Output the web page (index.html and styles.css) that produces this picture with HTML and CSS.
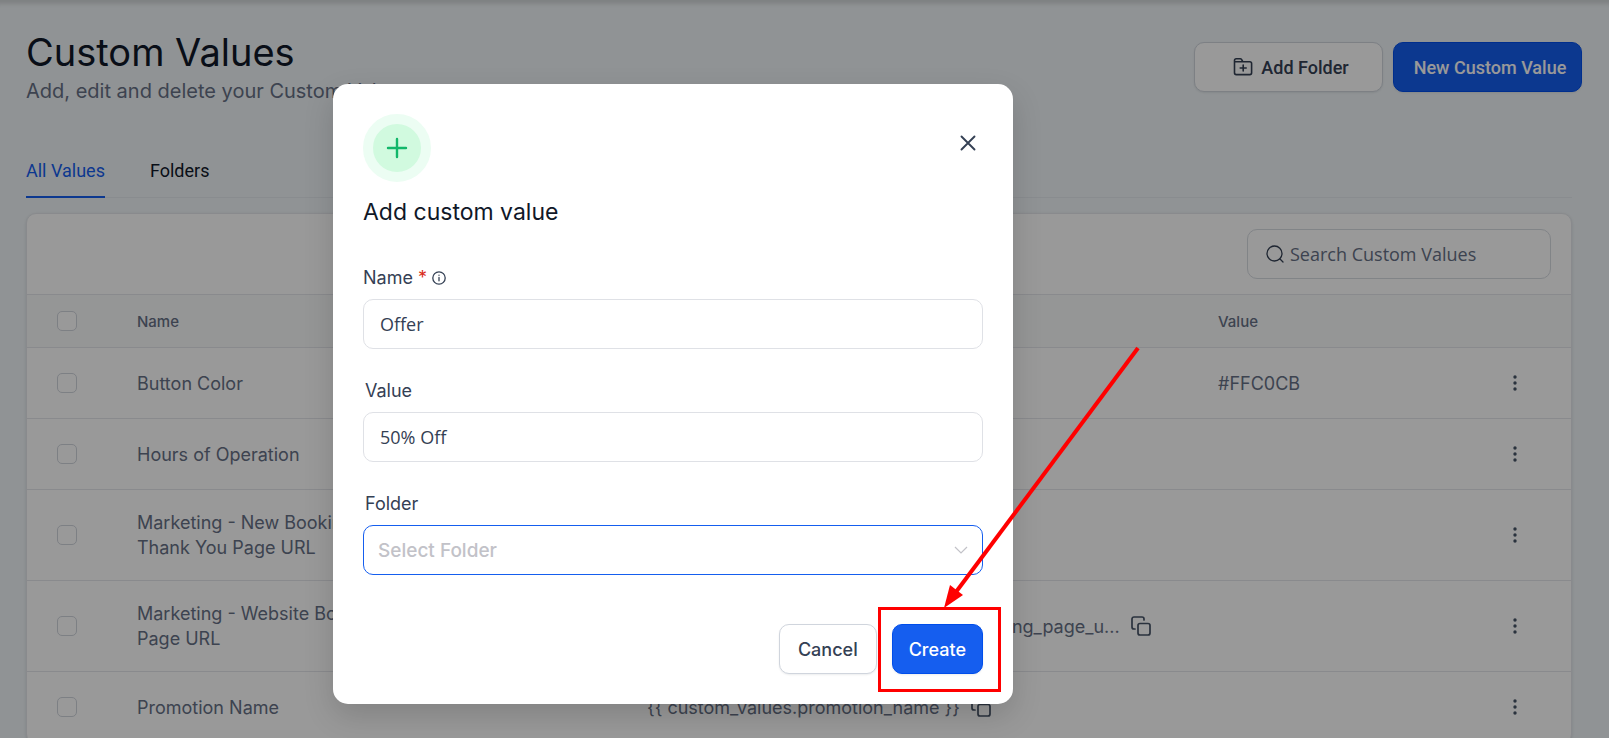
FILE: index.html
```html
<!DOCTYPE html>
<html lang="en">
<head>
  <meta charset="UTF-8">
  <meta name="viewport" content="width=device-width, initial-scale=1.0">
  <title>Custom Values</title>
  <link rel="stylesheet" href="styles.css">
</head>
<body>
  <main class="page">
    <header class="page-header">
      <div>
        <h1>Custom Values</h1>
        <p class="subtitle">Add, edit and delete your Custom Values</p>
      </div>
      <div class="header-actions">
        <button type="button" class="btn btn-top">
          <svg width="20" height="20" viewBox="0 0 20 20" fill="none" stroke="currentColor" stroke-width="1.6" stroke-linecap="round" stroke-linejoin="round">
            <path d="M1.5 5.5V3.5a1.8 1.8 0 0 1 1.8-1.8h3.9c.6 0 1 .2 1.3.7l1.3 2.3h7a1.8 1.8 0 0 1 1.8 1.8v9.3a1.8 1.8 0 0 1-1.8 1.8H3.3a1.8 1.8 0 0 1-1.8-1.8zM1.5 4.7h8M10.2 8v6M7.2 11h6"/>
          </svg>
          Add Folder
        </button>
        <button type="button" class="btn btn-top btn-primary">New Custom Value</button>
      </div>
    </header>

    <nav class="tabs">
      <a href="#values" class="tab active">All Values</a>
      <a href="#folders" class="tab">Folders</a>
    </nav>

    <section class="card">
      <div class="toolbar">
        <label class="search">
          <svg width="18" height="18" viewBox="0 0 18 18" fill="none" stroke="currentColor" stroke-width="1.3" stroke-linecap="round">
            <circle cx="8.5" cy="8.5" r="7.5"/>
            <path d="M14 14l3 3"/>
          </svg>
          <input type="text" placeholder="Search Custom Values" aria-label="Search Custom Values">
        </label>
      </div>
      <table>
        <colgroup>
          <col class="col-check">
          <col class="col-name">
          <col class="col-folder">
          <col class="col-key">
          <col class="col-value">
          <col class="col-menu">
        </colgroup>
        <thead>
          <tr>
            <th><input type="checkbox" aria-label="Select all"></th>
            <th>Name</th>
            <th></th>
            <th></th>
            <th>Value</th>
            <th></th>
          </tr>
        </thead>
        <tbody>
          <tr>
            <td><input type="checkbox" aria-label="Select Button Color"></td>
            <td>Button Color</td>
            <td></td>
            <td></td>
            <td>#FFC0CB</td>
            <td><button type="button" class="menu" aria-label="More"><svg width="4" height="16" viewBox="0 0 4 16" fill="currentColor"><circle cx="2" cy="2" r="1.7"/><circle cx="2" cy="8" r="1.7"/><circle cx="2" cy="14" r="1.7"/></svg></button></td>
          </tr>
          <tr>
            <td><input type="checkbox" aria-label="Select Hours of Operation"></td>
            <td>Hours of Operation</td>
            <td></td>
            <td></td>
            <td></td>
            <td><button type="button" class="menu" aria-label="More"><svg width="4" height="16" viewBox="0 0 4 16" fill="currentColor"><circle cx="2" cy="2" r="1.7"/><circle cx="2" cy="8" r="1.7"/><circle cx="2" cy="14" r="1.7"/></svg></button></td>
          </tr>
          <tr>
            <td><input type="checkbox" aria-label="Select Marketing - New Booking Thank You Page URL"></td>
            <td>Marketing - New Booking Thank You Page URL</td>
            <td></td>
            <td></td>
            <td></td>
            <td><button type="button" class="menu" aria-label="More"><svg width="4" height="16" viewBox="0 0 4 16" fill="currentColor"><circle cx="2" cy="2" r="1.7"/><circle cx="2" cy="8" r="1.7"/><circle cx="2" cy="14" r="1.7"/></svg></button></td>
          </tr>
          <tr>
            <td><input type="checkbox" aria-label="Select Marketing - Website Booking Page URL"></td>
            <td>Marketing - Website Booking Page URL</td>
            <td></td>
            <td>
              <div class="key">
                <span>{{ custom_values.marketing_website_booking_page_u...</span>
                <button type="button" class="copy" aria-label="Copy"><svg width="20" height="20" viewBox="0 0 20 20" fill="none" stroke="currentColor" stroke-width="1.7" stroke-linecap="round" stroke-linejoin="round"><rect x="7" y="7.5" width="12" height="11.5" rx="2"/><path d="M4 13H3a2 2 0 0 1-2-2V3a2 2 0 0 1 2-2h8a2 2 0 0 1 2 2v1"/></svg></button>
              </div>
            </td>
            <td></td>
            <td><button type="button" class="menu" aria-label="More"><svg width="4" height="16" viewBox="0 0 4 16" fill="currentColor"><circle cx="2" cy="2" r="1.7"/><circle cx="2" cy="8" r="1.7"/><circle cx="2" cy="14" r="1.7"/></svg></button></td>
          </tr>
          <tr>
            <td><input type="checkbox" aria-label="Select Promotion Name"></td>
            <td>Promotion Name</td>
            <td></td>
            <td>
              <div class="key">
                <span>{{ custom_values.promotion_name }}</span>
                <button type="button" class="copy" aria-label="Copy"><svg width="20" height="20" viewBox="0 0 20 20" fill="none" stroke="currentColor" stroke-width="1.7" stroke-linecap="round" stroke-linejoin="round"><rect x="7" y="7.5" width="12" height="11.5" rx="2"/><path d="M4 13H3a2 2 0 0 1-2-2V3a2 2 0 0 1 2-2h8a2 2 0 0 1 2 2v1"/></svg></button>
              </div>
            </td>
            <td></td>
            <td><button type="button" class="menu" aria-label="More"><svg width="4" height="16" viewBox="0 0 4 16" fill="currentColor"><circle cx="2" cy="2" r="1.7"/><circle cx="2" cy="8" r="1.7"/><circle cx="2" cy="14" r="1.7"/></svg></button></td>
          </tr>
        </tbody>
      </table>
    </section>
  </main>

  <div class="overlay">
    <form class="modal" role="dialog" aria-labelledby="modal-title">
      <div class="modal-top">
        <span class="badge">
          <svg width="22" height="22" viewBox="0 0 22 22" fill="none" stroke="currentColor" stroke-width="2.4" stroke-linecap="round"><path d="M11 2v18M2 11h18"/></svg>
        </span>
        <button type="button" class="close" aria-label="Close">
          <svg width="16" height="16" viewBox="0 0 16 16" fill="none" stroke="currentColor" stroke-width="1.9" stroke-linecap="round"><path d="M1.5 1.5l13 13M14.5 1.5l-13 13"/></svg>
        </button>
      </div>
      <h2 id="modal-title">Add custom value</h2>

      <div class="field">
        <label for="name" class="name-label">Name <span class="required">*</span>
          <svg width="14" height="14" viewBox="0 0 14 14" fill="none" stroke="currentColor" stroke-width="1.3" stroke-linecap="round"><circle cx="7" cy="7" r="6.2"/><path d="M7 6.5v3.3M7 4.2v.1"/></svg>
        </label>
        <input type="text" id="name" value="Offer">
      </div>
      <div class="field">
        <label for="value" class="inset">Value</label>
        <input type="text" id="value" value="50% Off">
      </div>
      <div class="field">
        <label for="folder" class="inset">Folder</label>
        <div class="select">
          <select id="folder">
            <option>Select Folder</option>
          </select>
          <svg width="14" height="8" viewBox="0 0 14 8" fill="none" stroke="currentColor" stroke-width="1.2"><path d="M1 1l6 6 6-6"/></svg>
        </div>
      </div>

      <div class="modal-actions">
        <button type="button" class="btn">Cancel</button>
        <button type="submit" class="btn btn-primary">Create</button>
      </div>

      <!-- arrow and box pointing at the Create button -->
      <svg class="callout" width="262" height="350" viewBox="0 0 262 350" fill="none" stroke="#f00" stroke-width="3">
        <rect x="1.5" y="262.5" width="120" height="82"/>
        <path d="M260 2L78 246" stroke-width="4"/>
        <path d="M66 262l6-23 13 10z" fill="#f00" stroke="none"/>
      </svg>
    </form>
  </div>
</body>
</html>
```

FILE: styles.css
```css
* {
  box-sizing: border-box;
}

body {
  margin: 0;
  height: 100vh;
  overflow: hidden;
  font-family: Inter, sans-serif;
  font-size: 18px;
  line-height: 25px;
  color: #667085;
  background-color: #f0f5f8;
  box-shadow: inset 0 8px 4px -4px rgba(0, 0, 0, 0.12);
}

button, input, select {
  font: inherit;
  color: inherit;
}

button {
  cursor: pointer;
}

.page {
  padding: 28px 27px 0 26px;
}

.page-header {
  display: flex;
  justify-content: space-between;
  align-items: flex-start;
}

h1 {
  margin: 0;
  font-size: 38px;
  font-weight: 400;
  line-height: 48px;
  color: #101828;
}

.subtitle {
  margin: 0;
  font-size: 20px;
  line-height: 30px;
}

.header-actions {
  display: flex;
  gap: 10px;
  padding-top: 14px;
}

.btn {
  display: flex;
  justify-content: center;
  align-items: center;
  gap: 8px;
  height: 50px;
  padding: 0 18px;
  border: 1px solid #d0d5dd;
  border-radius: 10px;
  background-color: #fff;
  color: #344054;
  font-weight: 500;
  box-shadow: 0 1px 2px rgba(16, 24, 40, 0.08);
}

.btn-primary {
  padding: 0 16px;
  border-color: #004eeb;
  background-color: #155eef;
  color: #fff;
}

.btn-top {
  width: 189px;
  padding: 0 0 0 5px;
  font-family: Roboto, sans-serif;
  white-space: nowrap;
}

.tabs {
  display: flex;
  gap: 45px;
  margin: 52px 10px 15px 0;
  border-bottom: 1px solid #e4e9ee;
}

.tab {
  padding-bottom: 13px;
  margin-bottom: -1px;
  border-bottom: 2px solid transparent;
  font-family: Roboto, sans-serif;
  color: #101828;
  text-decoration: none;
}

.tab.active {
  color: #155eef;
  border-color: #155eef;
}

.card {
  margin-right: 10px;
  border: 1px solid #e4e7ec;
  border-radius: 10px;
  background-color: #fff;
  box-shadow: 0 1px 3px rgba(16, 24, 40, 0.12);
}

.toolbar {
  display: flex;
  justify-content: flex-end;
  padding: 15px 20px;
}

.search {
  display: flex;
  align-items: center;
  gap: 6px;
  width: 304px;
  height: 50px;
  padding: 0 18px;
  border: 1px solid #d8dce2;
  border-radius: 10px;
  color: #344054;
}

.search input {
  flex: 1;
  min-width: 0;
  padding: 0;
  border: none;
  outline: none;
  background: none;
  font-family: "Open Sans", sans-serif;
}

.search input::placeholder {
  color: #667085;
}

table {
  width: 100%;
  table-layout: fixed;
  border-spacing: 0;
}

.col-check {
  width: 80px;
}

.col-name {
  width: 295px;
}

.col-folder {
  width: 215px;
}

.col-key {
  width: 571px;
}

.col-menu {
  width: 88px;
}

th, td {
  height: 71px;
  padding: 20px 0 20px 30px;
  border-bottom: 1px solid #e4e7ec;
  text-align: left;
  font-weight: 400;
}

th {
  height: 54px;
  padding-top: 0;
  padding-bottom: 0;
  border-top: 1px solid #e4e7ec;
  background-color: #f9fafb;
  font-size: 15px;
  font-weight: 500;
}

input[type="checkbox"] {
  appearance: none;
  display: block;
  width: 20px;
  height: 20px;
  margin: 0;
  border: 1px solid #d0d5dd;
  border-radius: 5px;
  background-color: #fff;
}

.key {
  display: flex;
  align-items: center;
  gap: 11px;
  white-space: nowrap;
}

.copy, .menu, .close {
  display: flex;
  padding: 0;
  border: none;
  background: none;
  color: #475467;
}

.overlay {
  position: absolute;
  inset: 0;
  display: flex;
  justify-content: center;
  align-items: flex-start;
  padding: 84px 263px 0 0;
  background-color: rgba(0, 0, 0, 0.4);
}

.modal {
  position: relative;
  width: 680px;
  padding: 30px;
  border-radius: 15px;
  background-color: #fff;
  color: #344054;
  box-shadow: 0 12px 30px rgba(0, 0, 0, 0.15);
}

.modal-top {
  display: flex;
  justify-content: space-between;
  align-items: flex-start;
}

.badge {
  display: flex;
  justify-content: center;
  align-items: center;
  width: 68px;
  height: 68px;
  border: 10px solid #ecfdf3;
  border-radius: 50%;
  background-color: #d1fadf;
  color: #12b76a;
}

.close {
  padding: 21px 7px;
  color: #344054;
}

h2 {
  margin: 14px 0 37px;
  font-size: 23px;
  font-weight: 400;
  line-height: 32px;
  color: #101828;
}

.field {
  margin-bottom: 29px;
}

.field label {
  display: block;
  padding-bottom: 9px;
}

.field .name-label {
  display: flex;
  align-items: center;
  gap: 5px;
}

.field .inset {
  padding-left: 2px;
}

.required {
  color: #d92d20;
}

.field input, .select {
  display: block;
  width: 100%;
  height: 50px;
  padding: 0 16px;
  border: 1px solid #dfe1e6;
  border-radius: 10px;
  background-color: #fff;
  font-family: "Open Sans", sans-serif;
}

.field .select {
  display: flex;
  align-items: center;
  padding: 0 14px;
  border-color: #155eef;
  font-family: Inter, sans-serif;
  font-size: 19px;
  font-weight: 500;
  color: #c2c2c8;
}

select {
  appearance: none;
  flex: 1;
  padding: 0;
  border: none;
  outline: none;
  background: none;
}

.modal-actions {
  display: flex;
  justify-content: flex-end;
  gap: 15px;
  margin-top: 49px;
}

.callout {
  position: absolute;
  left: 545px;
  top: 262px;
  pointer-events: none;
}
```
